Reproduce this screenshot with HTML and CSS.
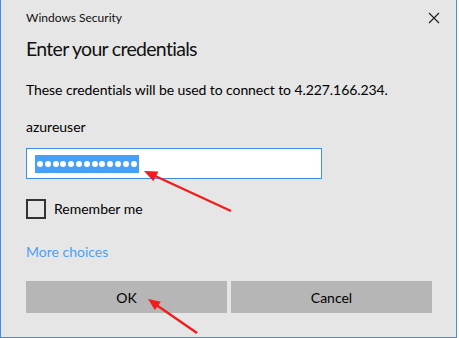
FILE: index.html
```html
<!DOCTYPE html>
<html lang="en">
<head>
    <meta charset="UTF-8">
    <title>Windows Security</title>
    <link rel="stylesheet" href="styles.css">
</head>
<body>

<div class="dialog">
    <div class="titlebar">
        <span class="caption">Windows Security</span>
        <svg class="close" width="12" height="12" viewBox="0 0 12 12">
            <path d="M1 1 L11 11 M11 1 L1 11" stroke="#1a1a1a" stroke-width="1.1" fill="none"/>
        </svg>
    </div>

    <h1 class="title">Enter your credentials</h1>
    <p class="info">These credentials will be used to connect to 4.227.166.234.</p>
    <div class="user">azureuser</div>

    <div class="password">
        <span class="selection">
            <i></i><i></i><i></i><i></i><i></i><i></i><i></i><i></i><i></i><i></i><i></i><i></i><i></i>
        </span>
    </div>

    <label class="remember">
        <span class="checkbox"></span>
        <span>Remember me</span>
    </label>

    <a class="more" href="#">More choices</a>

    <div class="buttons">
        <button class="btn">OK</button>
        <button class="btn">Cancel</button>
    </div>

    <!-- red annotation arrows -->
    <svg class="arrows" width="459" height="338" viewBox="0 0 459 338">
        <line x1="231" y1="211" x2="153" y2="175" stroke="#f21c1c" stroke-width="2.4"/>
        <polygon points="144,171 158.4,171.6 153.4,181.2" fill="#f21c1c"/>
        <line x1="197" y1="333" x2="155" y2="304" stroke="#f21c1c" stroke-width="2.4"/>
        <polygon points="148,299 160.8,301.8 154.9,309.9" fill="#f21c1c"/>
    </svg>
</div>

</body>
</html>
```

FILE: styles.css
```css
body {
    margin: 0;
    background-color: #fff;
    font-family: 'Lato', 'Noto Sans', sans-serif;
    color: #000;
}

.dialog {
    position: relative;
    box-sizing: border-box;
    width: 457px;
    height: 338px;
    background-color: #e6e6e6;
    border: 1px solid #3f8fe8;
    border-top: none;
    padding: 0 24px 0 25px;
}

.titlebar {
    display: flex;
    justify-content: space-between;
    align-items: center;
    padding-top: 10px;
    height: 16px;
}

.caption {
    font-size: 12px;
    line-height: 16px;
    color: #111;
}

.close {
    margin-right: -8px;
}

.title {
    margin: 9px 0 0 0;
    font-size: 19.5px;
    font-weight: normal;
    letter-spacing: -0.7px;
    line-height: 28px;
    color: #111;
}

.info,
.user {
    margin: 17px 0 0 0;
    font-size: 14px;
    line-height: 20px;
}

.info {
    letter-spacing: -0.08px;
}

.password {
    box-sizing: border-box;
    display: flex;
    align-items: center;
    margin-top: 11px;
    width: 296px;
    height: 31px;
    background-color: #fff;
    border: 1px solid #3f8fe8;
    padding-left: 8px;
}

.selection {
    display: flex;
    align-items: center;
    gap: 1.8px;
    height: 18px;
    padding: 0 2px;
    background-color: #46a0f8;
}

.selection i {
    width: 6px;
    height: 6px;
    border-radius: 50%;
    background-color: #fff;
}

.remember {
    display: flex;
    align-items: center;
    gap: 8px;
    margin-top: 20px;
    font-size: 14px;
    line-height: 20px;
}

.checkbox {
    box-sizing: border-box;
    width: 20px;
    height: 20px;
    border: 2px solid #333;
}

.more {
    display: block;
    margin-top: 23px;
    font-size: 14px;
    line-height: 20px;
    color: #4f9ff0;
    text-decoration: none;
}

.buttons {
    display: grid;
    grid-template-columns: 1fr 1fr;
    gap: 4px;
    margin-top: 19px;
}

.btn {
    height: 32px;
    border: none;
    background-color: #b6b6b6;
    font-family: inherit;
    font-size: 14px;
    font-weight: normal;
    color: #000;
}

.arrows {
    position: absolute;
    top: 0;
    left: -1px;
    pointer-events: none;
}
```
